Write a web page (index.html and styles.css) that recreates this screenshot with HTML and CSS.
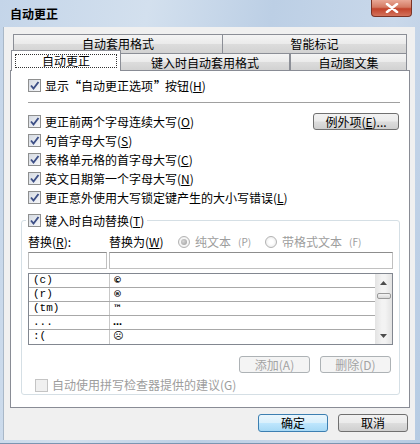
FILE: index.html
```html
<!DOCTYPE html>
<html lang="zh-CN">
<head>
    <meta charset="UTF-8">
    <title>自动更正</title>
    <link rel="stylesheet" href="styles.css">
</head>
<body>
    <div class="window">
        <div class="titlebar">
            <span class="title">自动更正</span>
            <span class="close">
                <svg width="14" height="10" viewBox="0 0 14 10"><path d="M2 1 L12 9 M12 1 L2 9" stroke="#fff" stroke-width="2.6" stroke-linecap="round"/></svg>
            </span>
        </div>
        <div class="frame">
            <div class="client">
                <div class="tabs tabs-back">
                    <div class="tab tab-format">自动套用格式</div>
                    <div class="tab tab-smart">智能标记</div>
                </div>
                <div class="tabs tabs-front">
                    <div class="tab tab-active"><span class="focus">自动更正</span></div>
                    <div class="tab tab-typing">键入时自动套用格式</div>
                    <div class="tab tab-gallery">自动图文集</div>
                </div>

                <div class="panel">
                    <div class="check-row">
                        <span class="cb"><svg width="11" height="11" viewBox="0 0 11 11"><path d="M2 5.5 L4.5 8.5 L9.5 2" fill="none" stroke="#3d4f86" stroke-width="1.9"/></svg></span>
                        <span>显示<span class="q q-open">“</span>自动更正选项<span class="q q-close">”</span>按钮(<u>H</u>)</span>
                    </div>
                    <div class="sep"></div>
                    <div class="check-row">
                        <span class="cb"><svg width="11" height="11" viewBox="0 0 11 11"><path d="M2 5.5 L4.5 8.5 L9.5 2" fill="none" stroke="#3d4f86" stroke-width="1.9"/></svg></span>
                        <span>更正前两个字母连续大写(<u>O</u>)</span>
                        <button class="btn btn-except">例外项(<u>E</u>)...</button>
                    </div>
                    <div class="check-row">
                        <span class="cb"><svg width="11" height="11" viewBox="0 0 11 11"><path d="M2 5.5 L4.5 8.5 L9.5 2" fill="none" stroke="#3d4f86" stroke-width="1.9"/></svg></span>
                        <span>句首字母大写(<u>S</u>)</span>
                    </div>
                    <div class="check-row">
                        <span class="cb"><svg width="11" height="11" viewBox="0 0 11 11"><path d="M2 5.5 L4.5 8.5 L9.5 2" fill="none" stroke="#3d4f86" stroke-width="1.9"/></svg></span>
                        <span>表格单元格的首字母大写(<u>C</u>)</span>
                    </div>
                    <div class="check-row">
                        <span class="cb"><svg width="11" height="11" viewBox="0 0 11 11"><path d="M2 5.5 L4.5 8.5 L9.5 2" fill="none" stroke="#3d4f86" stroke-width="1.9"/></svg></span>
                        <span>英文日期第一个字母大写(<u>N</u>)</span>
                    </div>
                    <div class="check-row">
                        <span class="cb"><svg width="11" height="11" viewBox="0 0 11 11"><path d="M2 5.5 L4.5 8.5 L9.5 2" fill="none" stroke="#3d4f86" stroke-width="1.9"/></svg></span>
                        <span>更正意外使用大写锁定键产生的大小写错误(<u>L</u>)</span>
                    </div>

                    <fieldset class="group">
                        <legend class="check-row">
                            <span class="cb"><svg width="11" height="11" viewBox="0 0 11 11"><path d="M2 5.5 L4.5 8.5 L9.5 2" fill="none" stroke="#3d4f86" stroke-width="1.9"/></svg></span>
                            <span>键入时自动替换(<u>T</u>)</span>
                        </legend>

                        <div class="labels">
                            <span class="lbl-from">替换(<u>R</u>):</span>
                            <span class="lbl-to">替换为(<u>W</u>)</span>
                            <span class="radio-opt radio-plain"><span class="radio checked"></span>纯文本<small>(P)</small></span>
                            <span class="radio-opt"><span class="radio"></span>带格式文本<small>(F)</small></span>
                        </div>

                        <div class="inputs">
                            <div class="box box-from"></div>
                            <div class="box box-to"></div>
                        </div>

                        <div class="list">
                            <div class="rows">
                                <div class="row"><span class="c1">(c)</span><span class="c2">©</span></div>
                                <div class="row"><span class="c1">(r)</span><span class="c2">®</span></div>
                                <div class="row"><span class="c1">(tm)</span><span class="c2">™</span></div>
                                <div class="row"><span class="c1">...</span><span class="c2">…</span></div>
                                <div class="row"><span class="c1">:(</span><span class="c2 sym">☹</span></div>
                            </div>
                            <div class="scrollbar">
                                <span class="arrow"><svg width="7" height="4" viewBox="0 0 7 4"><path d="M0 4 L3.5 0 L7 4 Z" fill="#4d4d4d"/></svg></span>
                                <span class="thumb"></span>
                                <span class="track"></span>
                                <span class="arrow"><svg width="7" height="4" viewBox="0 0 7 4"><path d="M0 0 L3.5 4 L7 0 Z" fill="#4d4d4d"/></svg></span>
                            </div>
                        </div>

                        <div class="actions">
                            <button class="btn" disabled>添加(A)</button>
                            <button class="btn" disabled>删除(D)</button>
                        </div>

                        <div class="check-row disabled">
                            <span class="cb"></span>
                            <span>自动使用拼写检查器提供的建议(G)</span>
                        </div>
                    </fieldset>
                </div>

                <div class="footer">
                    <button class="btn btn-default">确定</button>
                    <button class="btn">取消</button>
                </div>
            </div>
        </div>
    </div>
</body>
</html>
```

FILE: styles.css
```css
* {
    box-sizing: border-box;
}

body {
    margin: 0;
    font-family: "Noto Sans CJK SC", "Noto Sans", sans-serif;
    font-size: 12px;
    line-height: 14px;
    color: #000;
}

u {
    text-decoration: underline;
    text-underline-offset: 1px;
}

/* full width quote marks, as in the Windows UI font */
.q {
    display: inline-block;
    width: 12px;
    font-weight: bold;
}

.q-open {
    text-align: right;
    padding-right: 1px;
}

.q-close {
    text-align: left;
    padding-left: 1px;
}

.window {
    width: 420px;
    height: 444px;
    display: flex;
    flex-direction: column;
    background: linear-gradient(100deg, #c4d5e9 0%, #d3e0ee 30%, #bccfe5 55%, #c9d8ea 80%, #b6cbe3 100%);
}

.titlebar {
    height: 27px;
    display: flex;
    align-items: center;
    padding: 0 8px 0 10px;
}

.title {
    font-weight: bold;
    font-size: 12px;
}

.close {
    margin-left: auto;
    align-self: flex-start;
    width: 41px;
    height: 17px;
    display: flex;
    align-items: center;
    justify-content: center;
    border: 1px solid #7b3325;
    border-top: none;
    border-radius: 0 0 4px 4px;
    background: linear-gradient(#e9a896, #d47a63 45%, #c2432b 55%, #d3735c);
}

.frame {
    flex: 1;
    display: flex;
    padding: 0 5px 3px 3px;
    border-bottom: 1px solid #7b95b1;
}

.client {
    flex: 1;
    background: #f0f0f0;
    padding: 7px 5px 0 6px;
    display: flex;
    flex-direction: column;
    border-left: 1px solid #a9b8c8;
}

/* tabs */
.tabs {
    display: flex;
}

.tabs-back {
    height: 19px;
    margin: 0 3px;
}

.tabs-front {
    height: 17px;
    align-items: flex-end;
    margin: 0 3px 0 1px;
}

.tab {
    border: 1px solid #8b8e96;
    border-bottom: none;
    background: linear-gradient(#f4f4f4, #ebebeb 48%, #dcdcdc 52%, #d2d2d2);
    text-align: center;
    height: 100%;
    line-height: 17px;
}

.tab-format {
    width: 210px;
}

.tab-smart {
    flex: 1;
    border-left: none;
}

.tab-active {
    position: relative;
    z-index: 2;
    width: 110px;
    height: 21px;
    margin-bottom: -1px;
    background: #fff;
    padding: 3px 3px 0;
}

.focus {
    display: block;
    height: 14px;
    line-height: 12px;
    border: 1px dotted #333;
}

.tab-typing {
    width: 169px;
    border-left: none;
}

.tab-gallery {
    flex: 1;
}

.panel {
    border: 1px solid #898c95;
    background: #fff;
    padding: 5px 9px 12px 10px;
}

.check-row {
    display: flex;
    align-items: center;
    height: 19px;
    padding-left: 7px;
    gap: 4px;
}

.cb {
    width: 13px;
    height: 13px;
    flex: none;
    border: 1px solid #8e8f8f;
    background: linear-gradient(135deg, #d5dae2, #f6f7f9);
    display: flex;
    align-items: center;
    justify-content: center;
}

.sep {
    height: 1px;
    margin: 7px 0 9px 7px;
    background: #a0a0a0;
}

.btn {
    font-family: inherit;
    font-size: 12px;
    line-height: 14px;
    height: 17px;
    padding: 0;
    color: #000;
    border: 1px solid #707070;
    border-radius: 3px;
    background: linear-gradient(#f2f2f2, #ebebeb 48%, #dddddd 52%, #cfcfcf);
}

.btn-except {
    margin-left: auto;
    margin-right: 1px;
    width: 86px;
}

/* replace group */
.group {
    margin: 4px 0 0;
    padding: 0 6px;
    border: 1px solid #d5dfe5;
    border-radius: 3px;
    min-inline-size: 0;
}

.group legend {
    margin-left: -2px;
    padding: 0 3px 0 2px;
}

.labels {
    display: flex;
    align-items: center;
    height: 18px;
    margin-top: 3px;
}

.lbl-from {
    width: 81px;
}

.lbl-to {
    width: 69px;
}

.radio-opt {
    display: flex;
    align-items: center;
    gap: 5px;
    color: #9d9d9d;
}

.radio-opt small {
    font-size: 10px;
    margin-left: 2px;
}

.radio-plain {
    width: 87px;
}

.radio {
    width: 12px;
    height: 12px;
    border-radius: 50%;
    border: 1px solid #b3b3b3;
    background: radial-gradient(circle, #fff 30%, #e4e4e4);
    display: flex;
    align-items: center;
    justify-content: center;
}

.radio.checked::after {
    content: "";
    width: 6px;
    height: 6px;
    border-radius: 50%;
    background: radial-gradient(circle at 40% 40%, #d6d6d6, #9a9a9a);
}

.inputs {
    display: flex;
    gap: 2px;
    height: 17px;
    margin-top: 1px;
}

.box {
    border: 1px solid #c0c0c0;
    border-top-color: #8d8d8d;
    background: #fff;
}

.box-from {
    width: 79px;
}

.box-to {
    flex: 1;
}

.list {
    display: flex;
    height: 72px;
    margin-top: 4px;
    border: 1px solid #828790;
}

.rows {
    flex: 1;
    display: flex;
    flex-direction: column;
}

.row {
    height: 14px;
    display: flex;
    border-bottom: 1px solid #a8a8a8;
    font-family: "Liberation Mono", "DejaVu Sans Mono", monospace;
    font-size: 11px;
    line-height: 12px;
}

.row:last-child {
    border-bottom: none;
}

.c1 {
    width: 81px;
    padding-left: 4px;
    border-right: 1px solid #c8c8c8;
}

.c2 {
    padding-left: 3px;
    font-family: "DejaVu Sans", sans-serif;
    font-weight: bold;
    font-size: 9px;
}

.c2.sym {
    font-weight: normal;
    font-size: 10px;
}

.scrollbar {
    width: 17px;
    display: flex;
    flex-direction: column;
    align-items: center;
    background: linear-gradient(90deg, #e3e3e3, #f3f3f3 40%, #f3f3f3 60%, #e3e3e3);
}

.arrow {
    height: 17px;
    display: flex;
    align-items: center;
}

.thumb {
    width: 14px;
    height: 6px;
    border: 1px solid #999;
    border-radius: 2px;
    background: linear-gradient(#f4f4f4, #d8d8d8);
    margin-top: 2px;
}

.track {
    flex: 1;
}

.actions {
    display: flex;
    justify-content: flex-end;
    gap: 10px;
    margin: 11px 2px 0 0;
}

.actions .btn {
    width: 71px;
    color: #a3a3a3;
    border-color: #adb2b5;
    background: #f4f4f4;
}

.check-row.disabled {
    height: 18px;
    margin-top: 3px;
    color: #9d9d9d;
}

.check-row.disabled .cb {
    border-color: #c4c4c4;
    background: #f0f0f0;
}

.footer {
    display: flex;
    justify-content: flex-end;
    gap: 10px;
    margin: 6px 2px 0 0;
}

.footer .btn {
    width: 70px;
    height: 18px;
}

.btn-default {
    border-color: #3c7fb1;
    background: linear-gradient(#eaf6fd, #d9f0fc 48%, #bee6fd 52%, #a7d9f5);
}
```
